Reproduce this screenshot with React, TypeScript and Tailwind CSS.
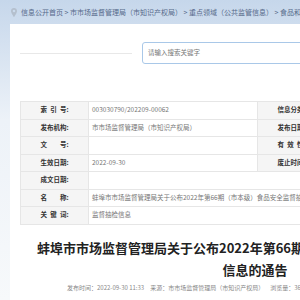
const rows: { label: string; value: string; label2?: string; value2?: string }[] = [
    { label: '索引号', value: '003030790/202209-00062', label2: '信息分类', value2: '食品安全' },
    { label: '发布机构', value: '市市场监督管理局（市知识产权局）', label2: '发布日期', value2: '2022-09-30' },
    { label: '文号', value: '', label2: '有效性', value2: '有效' },
    { label: '生效日期', value: '2022-09-30', label2: '废止时间', value2: '' },
    { label: '成文日期', value: '' },
    { label: '名称', value: '蚌埠市市场监督管理局关于公布2022年第66期（市本级）食品安全监督抽检信息的通告' },
    { label: '关键词', value: '监督抽检信息' },
]

const PinIcon = () => (
    <svg width="6" height="9" viewBox="0 0 12 18" className="shrink-0">
        <path
            d="M6 0C2.7 0 0 2.6 0 5.9 0 10.3 6 18 6 18s6-7.7 6-12.1C12 2.6 9.3 0 6 0zm0 8.4a2.5 2.5 0 1 1 0-5 2.5 2.5 0 0 1 0 5z"
            fill="#b4bfcd"
        />
    </svg>
)

const Label = ({ text }: { text: string }) => (
    <td className="border border-[#e6e6e6] bg-[#f5f5f5] font-bold text-[#333]">
        <div className="flex items-center justify-center">
            <span className="flex w-[26px] justify-between">
                {text.split('').map((c, i) => (
                    <span key={i}>{c}</span>
                ))}
            </span>
            <span>:</span>
        </div>
    </td>
)

const Value = ({ text, span }: { text: string; span?: number }) => (
    <td
        colSpan={span}
        className="border border-[#e6e6e6] pl-[3px] text-[#777] whitespace-nowrap overflow-hidden"
    >
        {text}
    </td>
)

export default function App() {
    return (
        <div className="w-[300px] h-[300px] overflow-hidden bg-linear-to-b from-[#c6d7eb] via-[#edf2f8] via-40% to-[#f7f9fb] font-['Noto_Sans_CJK_SC',sans-serif]">
            <div className="h-6 flex items-center gap-[4px] pl-[11px] whitespace-nowrap text-[7px] text-[#56698a]">
                <PinIcon />
                <span>
                    信息公开首页 &gt; 市市场监督管理局（市知识产权局） &gt; 重点领域（公共监管信息） &gt; 食品和药品安全
                </span>
            </div>

            <div className="ml-[10px] w-[490px] min-h-[276px] bg-white px-[10px] pt-[18px]">
                <div className="flex items-center gap-[10px]">
                    <div className="h-px flex-1 bg-[#e8e8e8]" />
                    <div className="w-[226px] h-[22px] flex items-center rounded-[3px] border border-[#a9c8e8] pl-[5px] text-[6.5px] text-[#777]">
                        请输入搜索关键字
                    </div>
                    <div className="h-px flex-1 bg-[#e8e8e8]" />
                </div>

                <table className="mt-[37px] w-full table-fixed border-collapse text-[6.5px]">
                    <colgroup>
                        <col className="w-[68px]" />
                        <col className="w-[169px]" />
                        <col className="w-[68px]" />
                        <col />
                    </colgroup>
                    <tbody>
                        {rows.map((r) => (
                            <tr key={r.label} className="h-[17.5px]">
                                <Label text={r.label} />
                                {r.label2 ? (
                                    <>
                                        <Value text={r.value} />
                                        <Label text={r.label2} />
                                        <Value text={r.value2 ?? ''} />
                                    </>
                                ) : (
                                    <Value text={r.value} span={3} />
                                )}
                            </tr>
                        ))}
                    </tbody>
                </table>

                <h1 className="mt-[12px] text-center text-[13px] leading-[22px] font-bold text-[#222]">
                    蚌埠市市场监督管理局关于公布2022年第66期（市本级）食品安全监督抽检
                    <br />
                    信息的通告
                </h1>

                <div className="mt-[2px] pl-[47px] flex gap-[6px] whitespace-nowrap text-[6px] leading-[10px] text-[#888]">
                    <span>发布时间：2022-09-30 11:33</span>
                    <span>来源：市市场监督管理局（市知识产权局）</span>
                    <span>浏览量：36</span>
                </div>
            </div>
        </div>
    )
}
